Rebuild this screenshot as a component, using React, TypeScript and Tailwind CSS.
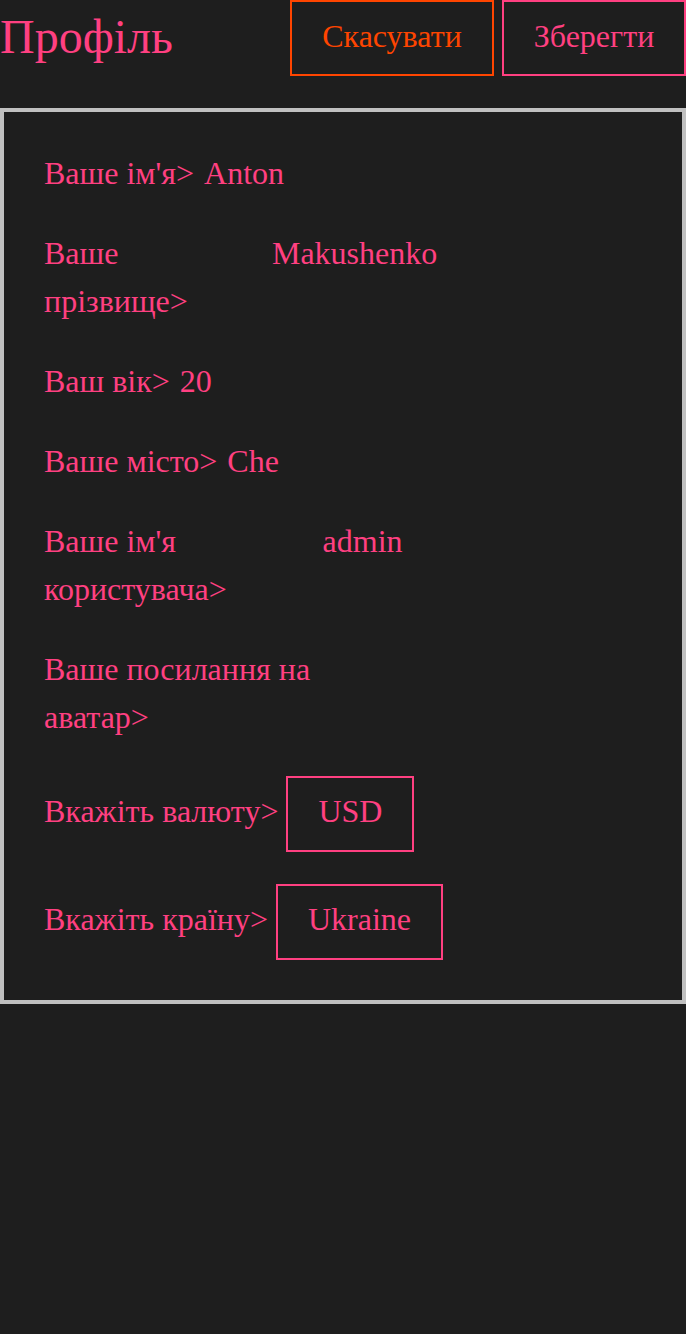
import React from "react";

const rows: { label: string; value: string }[] = [
  { label: "Ваше ім'я>", value: "Anton" },
  { label: "Ваше прізвище>", value: "Makushenko" },
  { label: "Ваш вік>", value: "20" },
  { label: "Ваше місто>", value: "Che" },
  { label: "Ваше ім'я користувача>", value: "admin" },
  { label: "Ваше посилання на аватар>", value: "" },
];

export default function App() {
  return (
    <div className="min-h-[1334px] w-full bg-[#1e1e1e] font-['Liberation_Serif',serif] text-[#ff4081]">
      <header className="flex h-[76px] items-center justify-between mb-8">
        <h1 className="pb-[3px] text-[48px] leading-none">Профіль</h1>
        <div className="flex h-full gap-2">
          <button className="h-full w-[204px] border-2 border-[#ff4500] pb-[4px] text-center text-[32px] leading-[48px] text-[#ff4500]">
            Скасувати
          </button>
          <button className="h-full w-[184px] border-2 border-[#ff4081] pb-[4px] text-center text-[32px] leading-[48px] text-[#ff4081]">
            Зберегти
          </button>
        </div>
      </header>
      <main className="flex flex-col gap-8 border-4 border-[#c0c0c0] px-10 pt-[37px] pb-10 text-[32px] leading-[48px]">
        {rows.map((r) => (
          <div key={r.label} className="flex items-start gap-[10px]">
            <span className="shrink">{r.label}</span>
            <span className="shrink basis-[384px] whitespace-nowrap">{r.value}</span>
          </div>
        ))}
        <div className="mt-[3px] flex items-center gap-2">
          <span className="pb-[6px]">Вкажіть валюту&gt;</span>
          <span className="flex h-[76px] items-center border-2 border-[#ff4081] px-[30px] pb-[6px]">USD</span>
        </div>
        <div className="flex items-center gap-2">
          <span className="pb-[6px]">Вкажіть країну&gt;</span>
          <span className="flex h-[76px] items-center border-2 border-[#ff4081] px-[30px] pb-[6px]">Ukraine</span>
        </div>
      </main>
    </div>
  );
}
